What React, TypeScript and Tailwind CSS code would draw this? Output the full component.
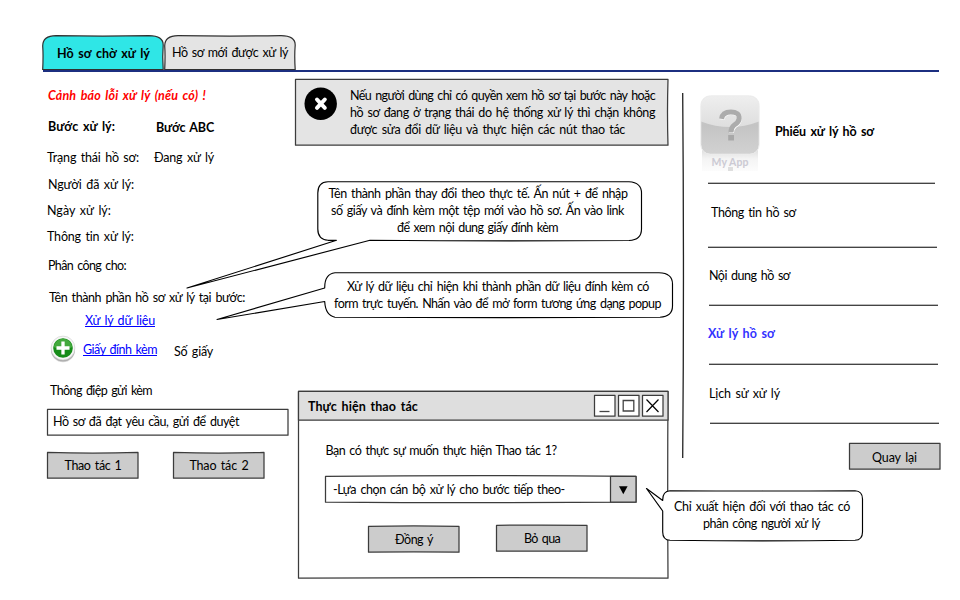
import { useLayoutEffect, useRef, useState, type ReactNode } from "react";

/** One line of text whose tracking is computed so that it fills its width. */
function Line({ children, className = "" }: { children: ReactNode; className?: string }) {
  const outer = useRef<HTMLSpanElement>(null);
  const inner = useRef<HTMLSpanElement>(null);
  const [tracking, setTracking] = useState(0);
  useLayoutEffect(() => {
    if (!outer.current || !inner.current) return;
    const count = (inner.current.textContent || "").length;
    const natural = inner.current.getBoundingClientRect().width;
    setTracking((outer.current.getBoundingClientRect().width - natural) / count);
  }, []);
  return (
    <span ref={outer} className={`block h-4 shrink-0 whitespace-nowrap leading-[18px] [word-spacing:1.5px] ${className}`}>
      <span ref={inner} style={{ letterSpacing: `${tracking}px` }}>
        {children}
      </span>
    </span>
  );
}

type BoxProps = {
  w: number;
  h: number;
  fill?: string;
  stroke?: string;
  bow?: [number, number, number, number];
  className?: string;
  children?: ReactNode;
};

/** A rectangle with slightly bowed, pen-like edges (top, right, bottom, left). */
function SketchBox({ w, h, fill = "#fff", stroke = "#3c3c3c", bow = [0, 0, 0, 0], className = "", children }: BoxProps) {
  const [t, r, b, l] = bow;
  const d = `M.5 .4Q${w / 2} ${0.4 + t} ${w - 1} .4Q${w - 1 + r} ${h / 2} ${w - 1} ${h - 0.8}Q${w / 2} ${h - 0.8 + b} .5 ${h - 0.8}Q${0.5 + l} ${h / 2} .5 .4Z`;
  return (
    <div className={`relative isolate shrink-0 ${className}`}>
      <svg className="absolute inset-0 -z-10 h-full w-full overflow-visible" viewBox={`0 0 ${w} ${h}`}>
        <path d={d} fill={fill} stroke={stroke} strokeWidth="1.25" strokeLinejoin="round" />
      </svg>
      {children}
    </div>
  );
}

function Button({ children, bow, className = "" }: { children: ReactNode; bow?: [number, number, number, number]; className?: string }) {
  return (
    <SketchBox w={92} h={27} fill="#ccc" bow={bow} className={`flex h-[27px] w-[92px] justify-center pt-[5px] ${className}`}>
      {children}
    </SketchBox>
  );
}

function Callout({ path, w, h, className, children }: { path: string; w: number; h: number; className: string; children: ReactNode }) {
  return (
    <div className={`absolute isolate flex flex-col ${className}`}>
      <svg className="absolute left-0 top-0 -z-10 overflow-visible" width={w} height={h}>
        <path d={path} fill="#fff" stroke="#000" strokeWidth="1.15" strokeLinejoin="round" />
      </svg>
      {children}
    </div>
  );
}

function Tab({ fill, w, className, children }: { fill: string; w: number; className: string; children: ReactNode }) {
  return (
    <div className={`relative isolate h-[35px] ${className}`}>
      <svg className="absolute inset-0 -z-10 overflow-visible" width={w} height="35">
        <path
          d={`M.7 34.5Q1.4 20 .7 11Q.7 .8 14 .7Q${w / 2} 1.4 ${w - 15} .7Q${w - 0.8} .8 ${w - 0.8} 10Q${w - 1.7} 21 ${w - 0.8} 34.5Z`}
          fill={fill}
          stroke="#303030"
          strokeWidth="1.2"
        />
      </svg>
      {children}
    </div>
  );
}

function AppIcon() {
  return (
    <svg width="60" height="77" viewBox="0 0 60 77" className="shrink-0">
      <defs>
        <linearGradient id="tile" x1="0" y1="0" x2="0" y2="1">
          <stop offset="0" stopColor="#ddd" />
          <stop offset=".5" stopColor="#c4c4c4" />
          <stop offset="1" stopColor="#d2d2d2" />
        </linearGradient>
        <linearGradient id="gloss" x1="0" y1="0" x2="0" y2="1">
          <stop offset="0" stopColor="#efefef" />
          <stop offset="1" stopColor="#dedede" />
        </linearGradient>
        <linearGradient id="reflection" x1="0" y1="0" x2="0" y2="1">
          <stop offset="0" stopColor="#dcdcdc" />
          <stop offset=".45" stopColor="#f4f4f4" />
          <stop offset="1" stopColor="#fcfcfc" />
        </linearGradient>
        <clipPath id="tileShape">
          <rect x="1" y="1" width="58" height="58" rx="9" />
        </clipPath>
      </defs>
      <path d="M2 54H58V76H2Z" fill="url(#reflection)" />
      <g clipPath="url(#tileShape)">
        <rect width="60" height="60" fill="url(#tile)" />
        <path d="M0 0H60V26Q30 38 0 26Z" fill="url(#gloss)" />
      </g>
      <rect x=".8" y=".8" width="58.4" height="58.4" rx="9.5" fill="none" stroke="#ececec" />
      <path d="M22 24.5Q23 17.6 31 17.6Q40 17.6 39.5 24Q39.2 27.5 34.8 30.6Q31.5 33 31.5 38" fill="none" stroke="#fff" strokeWidth="5" />
      <path d="M21.6 23.8Q22.5 17 30.8 17Q39.6 17 39.2 23.5Q39 27 34.3 30Q31 32.2 31 37.5" fill="none" stroke="#acacac" strokeWidth="5" />
      <path d="M28.2 40H34V45.5H28.2Z" fill="#a8a8a8" />
      <path d="M28 72H33V76H28Z" fill="#dedede" />
      <text x="11.5" y="71" textLength="37" fontSize="10.5" fontWeight="bold" fill="#c5c3ce" opacity=".85">
        My App
      </text>
    </svg>
  );
}

function AddIcon() {
  return (
    <svg width="28" height="28" viewBox="0 0 28 28" className="shrink-0">
      <circle cx="14" cy="15.3" r="12" fill="#999" opacity=".35" />
      <circle cx="14" cy="14.4" r="12" fill="#777" opacity=".45" />
      <circle cx="14" cy="13" r="11.9" fill="#f7f7f7" stroke="#ccc" strokeWidth=".6" />
      <circle cx="14" cy="13" r="9.8" fill="#168c19" />
      <path d="M4.6 12A9.5 9.5 0 0 1 23.4 12Q14 17 4.6 12Z" fill="#43a93d" />
      <path d="M14 6.5V19.5M7.5 13H20.5" stroke="#fff" strokeWidth="3.3" />
    </svg>
  );
}

function Rule({ className }: { className: string }) {
  return <div className={`h-[2px] shrink-0 border-t border-[#bbb] bg-[#444] ${className}`} />;
}

export default function App() {
  return (
    <div className="relative flex h-[600px] w-[960px] flex-col overflow-hidden bg-white pt-[35px] font-['Lato','Noto_Sans',sans-serif] text-[12.5px] text-black">
      <header className="flex h-[37px] w-[939px] shrink-0 flex-col pl-[42px]">
        <div className="flex h-[35px]">
          <Tab w={122} fill="#2fe6e6" className="w-[122px] pl-[15px] pt-[10px]">
            <Line className="w-[93px] font-bold">Hồ sơ chờ xử lý</Line>
          </Tab>
          <Tab w={132} fill="#e4e4e4" className="w-[132px] pl-[8px] pt-[9px]">
            <Line className="w-[116px]">Hồ sơ mới được xử lý</Line>
          </Tab>
        </div>
        <div className="ml-px h-[2px] bg-[#1c2f80]" />
      </header>

      <main className="flex grow">
        <section className="flex w-[295px] shrink-0 flex-col pl-[47px]">
          <Line className="ml-px mt-[15px] w-[158px] font-bold italic text-[#f00]">Cảnh báo lỗi xử lý (nếu có) !</Line>
          <div className="mt-[15px] flex gap-[41px] pl-px font-bold">
            <Line className="w-[67px]">Bước xử lý:</Line>
            <Line className="mt-px w-[58px]">Bước ABC</Line>
          </div>
          <div className="mt-[14px] flex gap-[15px]">
            <Line className="w-[92px]">Trạng thái hồ sơ:</Line>
            <Line className="w-[60px]">Đang xử lý</Line>
          </div>
          <Line className="ml-px mt-[11px] w-[86px]">Người đã xử lý:</Line>
          <Line className="mt-[10px] w-[64px]">Ngày xử lý:</Line>
          <Line className="mt-[10px] w-[87px]">Thông tin xử lý:</Line>
          <Line className="ml-px mt-[13px] w-[78px]">Phân công cho:</Line>
          <Line className="ml-[2px] mt-[16px] w-[196px]">Tên thành phần hồ sơ xử lý tại bước:</Line>
          <Line className="ml-[38px] mt-[7px] h-[15px] w-[70px] border-b border-[#00f] text-[#00f]">Xử lý dữ liệu</Line>
          <div className="mt-[8px] flex h-[28px] pl-[2px]">
            <AddIcon />
            <Line className="ml-[6px] mt-[6px] h-[15px] w-[74px] border-b border-[#00f] text-[#00f]">Giấy đính kèm</Line>
            <Line className="ml-[17px] mt-[8px] w-[39px]">Số giấy</Line>
          </div>
          <Line className="ml-[3px] mt-[19px] w-[102px]">Thông điệp gửi kèm</Line>
          <SketchBox w={242} h={27} bow={[0, 0, -0.5, 0]} className="mt-[11px] h-[27px] w-[242px] pl-[6px] pt-[4px]">
            <Line className="w-[186px]">Hồ sơ đã đạt yêu cầu, gửi để duyệt</Line>
          </SketchBox>
          <div className="mt-[16px] flex gap-[34px]">
            <Button bow={[1.6, 0, 0, 0]}>
              <Line className="w-[57px]">Thao tác 1</Line>
            </Button>
            <Button bow={[1.4, 0, 0, 0]}>
              <Line className="w-[59px]">Thao tác 2</Line>
            </Button>
          </div>
        </section>

        <section className="flex w-[387px] shrink-0 flex-col">
          <SketchBox w={374} h={67} fill="#e4e4e4" bow={[0, -1, 0, 0]} className="mt-[7px] flex h-[67px] w-[374px] pl-[9px] pt-[8px]">
            <svg width="34" height="34" viewBox="0 0 34 34" className="shrink-0">
              <circle cx="16.7" cy="16.7" r="16.2" />
              <path d="M13 12.5L20.8 20.8M20.8 12.5L13 20.8" stroke="#fff" strokeWidth="4" strokeLinecap="round" />
            </svg>
            <div className="ml-[12px] flex flex-col gap-px">
              <Line className="w-[305px]">Nếu người dùng chỉ có quyền xem hồ sơ tại bước này hoặc</Line>
              <Line className="w-[305px]">hồ sơ đang ở trạng thái do hệ thống xử lý thì chặn không</Line>
              <Line className="w-[275px]">được sửa đổi dữ liệu và thực hiện các nút thao tác</Line>
            </div>
          </SketchBox>

          <SketchBox w={371} h={188} bow={[0, -0.6, -1, 0]} className="ml-[2.5px] mt-[245px] flex h-[188px] w-[371px] flex-col">
            <SketchBox w={371} h={30} fill="#dedede" bow={[0, 0, -0.6, 0]} className="flex h-[30px] w-[371px] pl-[10.5px] pt-[7px]">
              <Line className="w-[110px] font-bold">Thực hiện thao tác</Line>
              <div className="-mt-[3px] ml-[176px] flex gap-[2px]">
                <SketchBox w={22} h={22} className="size-[22px]">
                  <svg width="22" height="22"><path d="M5.5 16.5H15.5" stroke="#444" strokeWidth="1.3" /></svg>
                </SketchBox>
                <SketchBox w={22} h={22} className="size-[22px]">
                  <svg width="22" height="22"><path d="M5.2 5.5H15.8V16H5.2Z" fill="none" stroke="#444" strokeWidth="1.3" /></svg>
                </SketchBox>
                <SketchBox w={22} h={22} className="size-[22px]">
                  <svg width="22" height="22"><path d="M4.5 4.5L16.5 17M16.5 4.5L4.5 17" stroke="#000" strokeWidth="1.2" /></svg>
                </SketchBox>
              </div>
            </SketchBox>
            <Line className="ml-[28px] mt-[21px] w-[231px]">Bạn có thực sự muốn thực hiện Thao tác 1?</Line>
            <SketchBox w={312} h={27} bow={[-1.5, 0, 1, 0]} className="ml-[27.5px] mt-[18px] flex h-[27px] w-[312px] pl-[8px]">
              <Line className="mt-[5px] w-[232px]">-Lựa chọn cán bộ xử lý cho bước tiếp theo-</Line>
              <SketchBox w={27} h={27} fill="#ccc" className="ml-auto h-[27px] w-[27px]">
                <svg width="27" height="27"><path d="M9 10.3H17.6L13.3 18.3Z" /></svg>
              </SketchBox>
            </SketchBox>
            <div className="ml-[70.5px] mt-[22px] flex gap-[36px]">
              <Button bow={[-1, 0, -0.7, 0]} className="mt-px">
                <Line className="w-[38px]">Đồng ý</Line>
              </Button>
              <Button bow={[-0.8, 0, 0, 0]}>
                <Line className="w-[36px]">Bỏ qua</Line>
              </Button>
            </div>
          </SketchBox>
        </section>

        <svg width="3" height="366" className="mt-[21px] shrink-0">
          <path d="M.7 0Q2.2 182 .7 365" fill="none" stroke="#222" strokeWidth="1.3" />
        </svg>

        <aside className="flex w-[255px] flex-col pl-[15px]">
          <div className="mt-[23px] flex">
            <AppIcon />
            <Line className="ml-[15px] mt-[28px] w-[99px] font-bold">Phiếu xử lý hồ sơ</Line>
          </div>
          <Rule className="ml-[8px] mt-[10px] w-[227px]" />
          <Line className="ml-[11px] mt-[20px] w-[85px]">Thông tin hồ sơ</Line>
          <Rule className="ml-[8px] mt-[26px] w-[229px]" />
          <Line className="ml-[9px] mt-[19px] w-[81px]">Nội dung hồ sơ</Line>
          <Rule className="ml-[9px] mt-[21px] w-[229px]" />
          <Line className="ml-[8px] mt-[19px] w-[67px] font-bold text-[#33f]">Xử lý hồ sơ</Line>
          <Rule className="ml-[9px] mt-[22px] w-[229px]" />
          <Line className="ml-[9px] mt-[20px] w-[71px]">Lịch sử xử lý</Line>
          <Rule className="ml-[10px] mt-[21px] w-[229px]" />
          <Button className="ml-[149px] mt-[19px]">
            <Line className="-ml-px mt-px w-[45px]">Quay lại</Line>
          </Button>
        </aside>
      </main>

      <Callout
        w={325}
        h={60}
        className="left-[317px] top-[181px] h-[60px] w-[325px] items-center gap-[1px] pt-[4px]"
        path="M11 .7Q160 1.2 312 .7Q324.5 1.5 324.5 12V48Q324.5 59 312 59.5Q180 60.4 53 59.3L-130 107L19.5 59.3H11Q.8 58.5 .8 48V12Q.8 1 11 .7Z"
      >
        <Line className="-ml-[3px] w-[299px]">Tên thành phần thay đổi theo thực tế. Ấn nút + để nhập</Line>
        <Line className="-ml-[4px] w-[293px]">số giấy và đính kèm một tệp mới vào hồ sơ. Ấn vào link</Line>
        <Line className="-ml-[4px] w-[161px]">để xem nội dung giấy đính kèm</Line>
      </Callout>

      <Callout
        w={349}
        h={46}
        className="left-[324px] top-[272px] h-[46px] w-[349px] items-center gap-[1px] pt-[6px]"
        path="M11 .7H335Q348.5 1 348.5 12V34Q348.5 44.5 336 45.2Q180 46 11 45.2Q1.5 43.5 .7 29.5L-107 47.5L.7 16Q.5 2 11 .7Z"
      >
        <Line className="-ml-[1px] w-[302px]">Xử lý dữ liệu chỉ hiện khi thành phần dữ liệu đính kèm có</Line>
        <Line className="-ml-[2px] w-[327px]">form trực tuyến. Nhấn vào để mở form tương ứng dạng popup</Line>
      </Callout>

      <Callout
        w={201}
        h={51}
        className="left-[662px] top-[490px] h-[51px] w-[201px] items-center gap-[1px] pt-[8px]"
        path="M8 .7Q100 1.2 193 .7Q200.5 1 200.5 9V42Q200.5 50 193 50.3Q100 51.5 8 50.3Q.7 50 .7 42V21L-15.5 -1.5L.7 10.5Q.5 1 8 .7Z"
      >
        <Line className="-ml-[1px] w-[176px]">Chỉ xuất hiện đối với thao tác có</Line>
        <Line className="-ml-[2px] w-[117px]">phân công người xử lý</Line>
      </Callout>
    </div>
  );
}
